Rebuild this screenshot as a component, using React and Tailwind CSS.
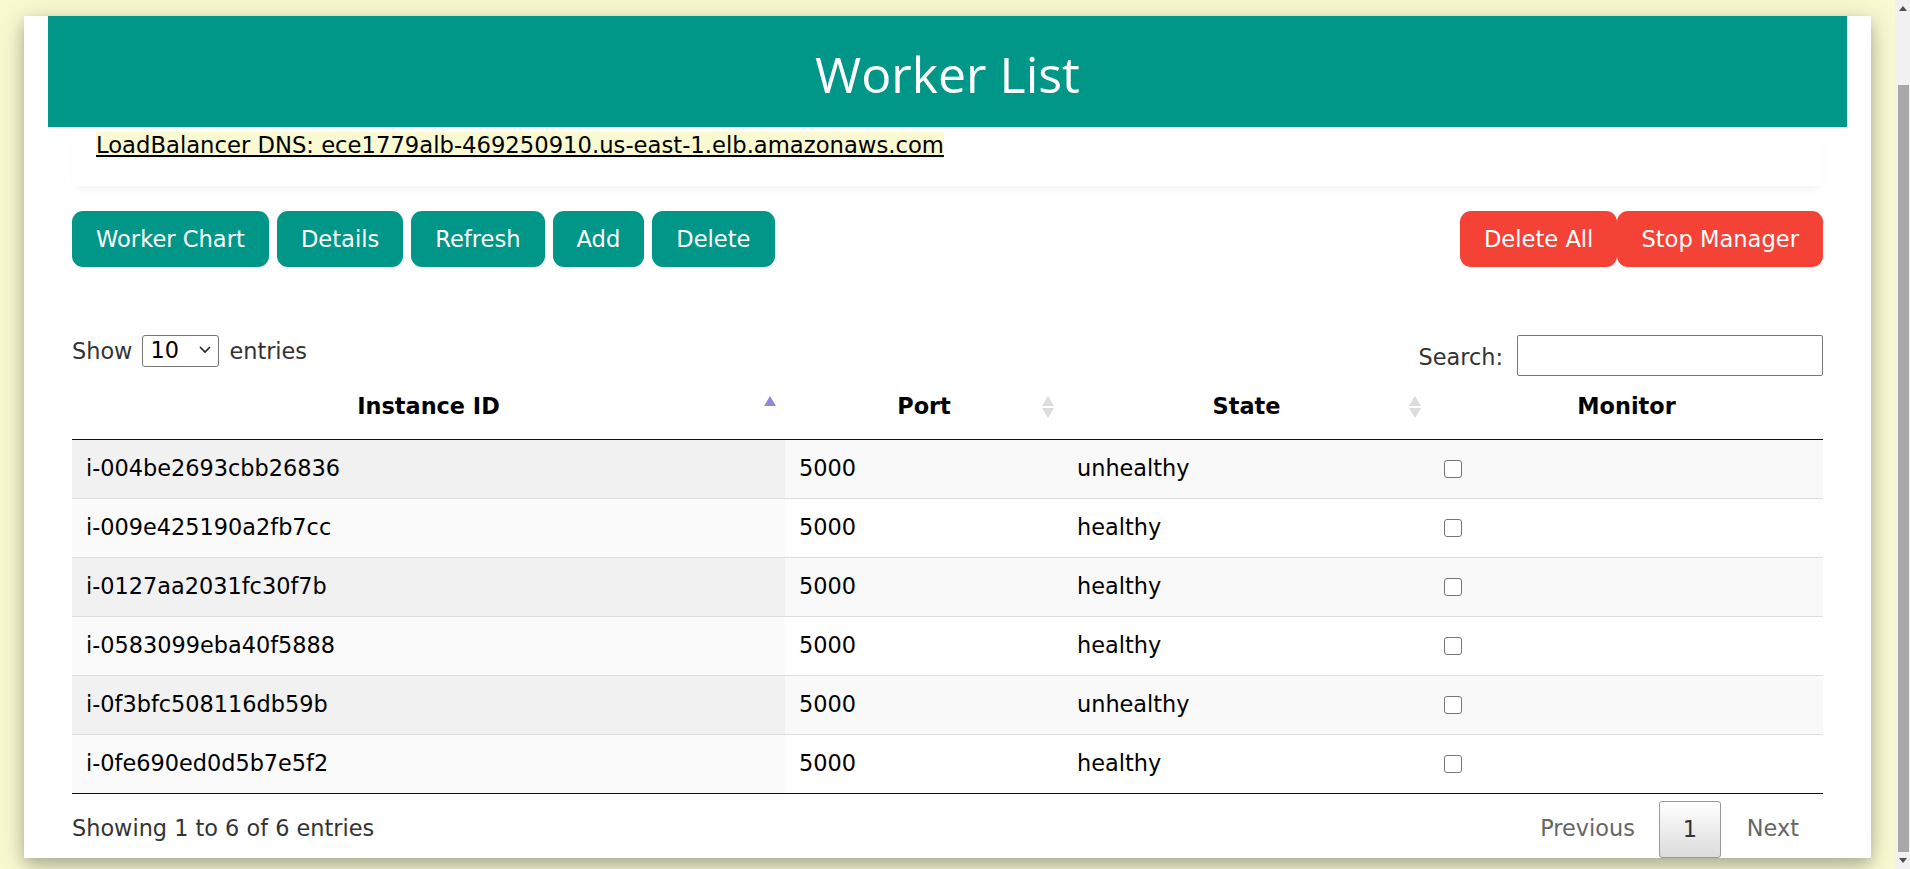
import React from 'react';

const workers = [
  { id: 'i-004be2693cbb26836', port: 5000, state: 'unhealthy' },
  { id: 'i-009e425190a2fb7cc', port: 5000, state: 'healthy' },
  { id: 'i-0127aa2031fc30f7b', port: 5000, state: 'healthy' },
  { id: 'i-0583099eba40f5888', port: 5000, state: 'healthy' },
  { id: 'i-0f3bfc508116db59b', port: 5000, state: 'unhealthy' },
  { id: 'i-0fe690ed0d5b7e5f2', port: 5000, state: 'healthy' },
];

function SortIcon({ active }) {
  if (active) {
    return (
      <svg className="absolute right-[9px] top-[17px]" width="12" height="22" viewBox="0 0 12 22">
        <path d="M6 0 L12 10 L0 10 Z" fill="#8a8ade" />
      </svg>
    );
  }
  return (
    <svg className="absolute right-[9px] top-[17px]" width="12" height="22" viewBox="0 0 12 22">
      <path d="M6 0 L12 10 L0 10 Z" fill="#dcdcdc" />
      <path d="M0 12 L12 12 L6 22 Z" fill="#dcdcdc" />
    </svg>
  );
}

function TealButton({ children }) {
  return (
    <button className="h-[56px] px-[24px] rounded-[11px] bg-[#009688] text-white text-[22.6px] leading-[27px]">
      {children}
    </button>
  );
}

function RedButton({ children }) {
  return (
    <button className="h-[56px] px-[24px] rounded-[11px] bg-[#f44336] text-white text-[22.6px] leading-[27px]">
      {children}
    </button>
  );
}

function Scrollbar() {
  return (
    <div className="w-[15px] h-full bg-[#f1f1f1] flex flex-col items-center">
      <div className="h-[17px] flex items-center justify-center">
        <svg width="8" height="5" viewBox="0 0 8 5">
          <path d="M4 0 L8 5 L0 5 Z" fill="#505050" />
        </svg>
      </div>
      <div className="mt-[68px] w-[11px] ml-[2px] flex-1 bg-[#a8a8a8]" />
      <div className="h-[17px] flex items-center justify-center">
        <svg width="8" height="5" viewBox="0 0 8 5">
          <path d="M0 0 L8 0 L4 5 Z" fill="#505050" />
        </svg>
      </div>
    </div>
  );
}

function App() {
  return (
    <div className="flex w-full h-[869px] overflow-hidden bg-[#fafad2] font-['DejaVu_Sans',Verdana,sans-serif]">
      <div className="flex-1 h-full">
        <div className="ml-[24px] mt-[16px] w-[1847px] bg-white px-[24px] shadow-[0_6px_14px_0_rgba(0,0,0,0.2),0_6px_28px_0_rgba(0,0,0,0.19)]">
          {/* Header */}
          <div className="h-[111px] pt-[5px] bg-[#009688] flex items-center justify-center">
            <h1 className="text-white text-[50px] leading-[60px] font-normal font-['Open_Sans',sans-serif]">
              Worker List
            </h1>
          </div>

          <div className="mx-[24px]">
            {/* Load balancer */}
            <div className="px-[24px] pt-[5px] pb-[26px] shadow-[0_6px_10px_-4px_rgba(0,0,0,0.06)]">
              <a href="#" className="bg-[#fafad2] text-black underline text-[22.7px] leading-[27px]">
                LoadBalancer DNS: ece1779alb-469250910.us-east-1.elb.amazonaws.com
              </a>
            </div>

            {/* Actions */}
            <div className="mt-[25px] flex items-center justify-between">
              <div className="flex gap-[8px]">
                <TealButton>Worker Chart</TealButton>
                <TealButton>Details</TealButton>
                <TealButton>Refresh</TealButton>
                <TealButton>Add</TealButton>
                <TealButton>Delete</TealButton>
              </div>
              <div className="flex">
                <RedButton>Delete All</RedButton>
                <RedButton>Stop Manager</RedButton>
              </div>
            </div>

            {/* Table controls */}
            <div className="mt-[68px] flex items-start justify-between text-[22.4px] text-[#333]">
              <div className="flex items-center h-[32px] gap-[10px]">
                <span className="leading-[27px]">Show</span>
                <div className="relative">
                  <select className="appearance-none w-[77px] h-[32px] pl-[7px] border border-[#767676] rounded-[3px] bg-white text-black text-[22.4px] leading-[27px]">
                    <option>10</option>
                    <option>25</option>
                    <option>50</option>
                    <option>100</option>
                  </select>
                  <svg className="absolute right-[8px] top-[12px] pointer-events-none" width="12" height="8" viewBox="0 0 12 8">
                    <path d="M1 1 L6 6 L11 1" stroke="#222" strokeWidth="1.6" fill="none" />
                  </svg>
                </div>
                <span className="leading-[27px]">entries</span>
              </div>
              <div className="flex items-center h-[41px] gap-[14px]">
                <span className="leading-[27px] mt-[3px]">Search:</span>
                <input className="w-[306px] h-[41px] border border-[#767676] rounded-[2px] bg-white" />
              </div>
            </div>

            {/* Table */}
            <div className="mt-[3px] text-[22.4px] text-black">
              <div className="grid grid-cols-[713px_278px_367px_393px] h-[61px] pb-[4px] border-b border-[#111] font-bold">
                <div className="relative flex items-center justify-center">
                  Instance ID
                  <SortIcon active />
                </div>
                <div className="relative flex items-center justify-center">
                  Port
                  <SortIcon />
                </div>
                <div className="relative flex items-center justify-center">
                  State
                  <SortIcon />
                </div>
                <div className="flex items-center justify-center">Monitor</div>
              </div>

              {workers.map((w, i) => {
                const odd = i % 2 === 0;
                return (
                  <div
                    key={w.id}
                    className={
                      'grid grid-cols-[713px_278px_367px_393px] h-[58px] ' +
                      (i > 0 ? 'border-t border-[#ddd] h-[59px] ' : '') +
                      (odd ? 'bg-[#f9f9f9]' : 'bg-white')
                    }
                  >
                    <div className={'flex items-center px-[14px] ' + (odd ? 'bg-[#f1f1f1]' : 'bg-[#fafafa]')}>
                      {w.id}
                    </div>
                    <div className="flex items-center px-[14px]">{w.port}</div>
                    <div className="flex items-center px-[14px]">{w.state}</div>
                    <div className="flex items-center px-[14px]">
                      <input
                        type="checkbox"
                        className="appearance-none w-[18px] h-[18px] border border-[#767676] rounded-[3px] bg-white"
                      />
                    </div>
                  </div>
                );
              })}
              <div className="border-t border-[#111]" />
            </div>

            {/* Footer */}
            <div className="mt-[7px] flex items-center justify-between text-[22.4px]">
              <div className="text-[#333] leading-[27px] -mt-[3px]">Showing 1 to 6 of 6 entries</div>
              <div className="flex items-center">
                <span className="px-[22px] text-[#666] leading-[27px] -mt-[2px]">Previous</span>
                <span className="ml-[2px] w-[62px] h-[57px] flex items-center justify-center border border-[#979797] rounded-[3px] bg-gradient-to-b from-white to-[#dcdcdc] text-[#333]">
                  1
                </span>
                <span className="pl-[26px] pr-[24px] text-[#666] leading-[27px] -mt-[2px]">Next</span>
              </div>
            </div>
          </div>
        </div>
      </div>
      <Scrollbar />
    </div>
  );
}

export default App;
